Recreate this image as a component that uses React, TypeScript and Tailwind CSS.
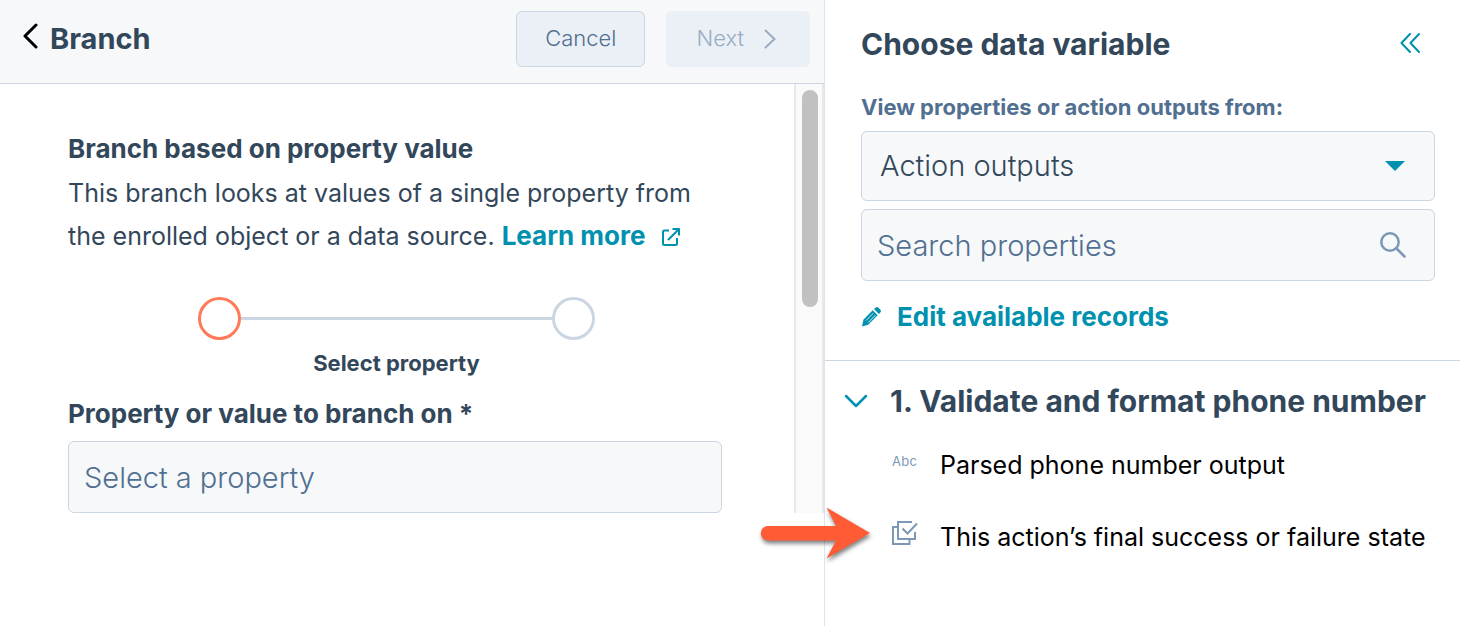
import React, { useState } from 'react';

interface OutputItem {
    id: string;
    label: string;
    icon: React.ReactNode;
    highlighted?: boolean;
}

const CheckStackIcon = () => (
    <svg viewBox="0 0 26 24" className="w-[26px] h-6" fill="none" stroke="#7c98b6" strokeWidth="2" aria-hidden="true">
        <path d="M20 1H6v17h17v-7" />
        <path d="M5 6H1v17h16.500v-4" />
        <path d="M10.500 7.500l5 5L25 2.500" />
    </svg>
);

const PointerArrow = () => (
    <svg
        viewBox="0 0 110 54"
        className="absolute right-full mr-[22px] top-1/2 -translate-y-1/2 w-[110px] h-[54px] overflow-visible drop-shadow-[1px_3px_2px_rgba(0,0,0,0.5)]"
        fill="#ff5c35"
        aria-hidden="true"
    >
        <path d="M8 20h68L66.500 1.500 110 27 66.500 52.500 76 34.500H8a7.250 7.250 0 0 1 0-14.500z" />
    </svg>
);

const outputs: OutputItem[] = [
    {
        id: 'parsed',
        label: 'Parsed phone number output',
        icon: <span className="text-[13px] leading-6 tracking-wide text-[#7c98b6]">Abc</span>,
    },
    {
        id: 'state',
        label: 'This action’s final success or failure state',
        icon: <CheckStackIcon />,
        highlighted: true,
    },
];

const BranchPanel: React.FC = () => {
    const [property, setProperty] = useState('');

    return (
        <section className="flex flex-col min-w-0 border-r border-[#dfe3eb]">
            {/* Panel header */}
            <header className="h-[84px] flex items-center justify-between pl-[22px] pr-3.5 pb-1.5 bg-[#f6f8fa] border-b border-[#cbd6e2]">
                <div className="flex items-center gap-3">
                    <button aria-label="Back" className="pb-1.5">
                        <svg viewBox="0 0 16 26" className="w-4 h-[26px]" fill="none" stroke="#000" strokeWidth="3" strokeLinecap="round" strokeLinejoin="round">
                            <path d="M14 2L3 13l11 11" />
                        </svg>
                    </button>
                    <h1 className="text-[29px] leading-9 font-bold">Branch</h1>
                </div>
                <div className="flex gap-[21px]">
                    <button className="h-14 px-7 rounded-md border border-[#cbd6e2] bg-[#eaf0f6] text-[22px] font-[350] text-[#516f90]">
                        Cancel
                    </button>
                    <button disabled className="h-14 pl-[30px] pr-[34px] flex items-center gap-5 rounded-md bg-[#eaf0f6] text-[22px] font-[350] text-[#99acc2]">
                        Next
                        <svg viewBox="0 0 12 20" className="w-3 h-5" fill="none" stroke="currentColor" strokeWidth="2" strokeLinecap="round" aria-hidden="true">
                            <path d="M1.500 1.500L10.500 10l-9 8.500" />
                        </svg>
                    </button>
                </div>
            </header>

            <div className="flex">
                <div className="flex-1 min-w-0 pl-[68px] pr-[72px] pt-[43px]">
                    <h2 className="text-[26px] leading-[43px] font-bold">Branch based on property value</h2>
                    <p className="pt-0.5 text-[25px] leading-[43px]">
                        This branch looks at values of a single property from the enrolled object or a data source.{' '}
                        <a href="#learn" className="text-[26px] leading-none font-bold text-[#0091ae] whitespace-nowrap">
                            Learn more
                            <svg viewBox="0 0 20 20" className="inline w-5 h-5 ml-4 align-[-2px]" fill="none" stroke="currentColor" strokeWidth="2" strokeLinejoin="round" aria-hidden="true">
                                <path d="M8 3.500H3.500a1.500 1.500 0 0 0-1.500 1.500v11.500a1.500 1.500 0 0 0 1.500 1.500h11a1.500 1.500 0 0 0 1.500-1.500V11" />
                                <path d="M7 13L18 2M11.500 2H18v6.500" />
                            </svg>
                        </a>
                    </p>

                    {/* Stepper */}
                    <div className="pl-[3px] pt-[39px]">
                        <div className="flex items-center px-[127px]">
                            <span className="w-[43px] h-[43px] shrink-0 rounded-full border-3 border-[#ff7a59]"></span>
                            <span className="flex-1 h-[3px] bg-[#cbd6e2]"></span>
                            <span className="w-[43px] h-[43px] shrink-0 rounded-full border-3 border-[#cbd6e2]"></span>
                        </div>
                        <p className="pt-[7px] text-center text-[22px] leading-8 font-bold">Select property</p>
                    </div>

                    <label htmlFor="branch-property" className="block pt-[13px] text-[26px] leading-[43px] font-bold">
                        Property or value to branch on *
                    </label>
                    <input
                        id="branch-property"
                        type="text"
                        value={property}
                        onChange={(e) => setProperty(e.target.value)}
                        placeholder="Select a property"
                        className="block mt-1.5 w-full h-[72px] px-[15px] rounded-md border border-[#cbd6e2] bg-[#f6f8fa] text-[29px] font-[350] placeholder:text-[#516f90]"
                    />
                </div>

                {/* Scroll track */}
                <div className="w-[30px] shrink-0 pl-1.5 pt-1.5 bg-[#fafafa] border-x-2 border-[#e8e8e8]">
                    <div className="w-4 h-[217px] rounded-full bg-[#c1c1c1]"></div>
                </div>
            </div>
        </section>
    );
};

const VariablePanel: React.FC = () => {
    const [source, setSource] = useState('Action outputs');
    const [query, setQuery] = useState('');
    const [open, setOpen] = useState(true);

    return (
        <aside className="min-w-0">
            <div className="pl-9 pr-[25px] pt-[26px] pb-[25px] border-b border-[#cbd6e2]">
                <div className="flex items-center justify-between pr-[15px]">
                    <h2 className="text-[30px] leading-9 font-bold">Choose data variable</h2>
                    <button aria-label="Collapse panel" className="pb-0.5">
                        <svg viewBox="0 0 20 20" className="w-5 h-5" fill="none" stroke="#0091ae" strokeWidth="2" strokeLinecap="round" strokeLinejoin="round">
                            <path d="M10 1L1.500 10l8.500 9M19 1l-8.500 9 8.500 9" />
                        </svg>
                    </button>
                </div>

                <label htmlFor="source" className="block pt-[29px] text-[22px] leading-8 font-bold text-[#516f90]">
                    View properties or action outputs from:
                </label>
                <div className="relative mt-2">
                    <select
                        id="source"
                        value={source}
                        onChange={(e) => setSource(e.target.value)}
                        className="appearance-none block w-full h-[70px] px-[18px] rounded-md border border-[#cbd6e2] bg-[#f6f8fa] text-[29px] font-[350]"
                    >
                        <option>Action outputs</option>
                    </select>
                    <svg viewBox="0 0 20 10" className="absolute right-[30px] top-1/2 -translate-y-1/2 w-5 h-2.5 pointer-events-none" fill="#0091ae" aria-hidden="true">
                        <path d="M0 0h20L10 10z" />
                    </svg>
                </div>
                <div className="relative mt-2">
                    <input
                        type="text"
                        aria-label="Search properties"
                        value={query}
                        onChange={(e) => setQuery(e.target.value)}
                        placeholder="Search properties"
                        className="block w-full h-[72px] pl-[15px] pr-16 rounded-md border border-[#cbd6e2] bg-[#f6f8fa] text-[29px] font-[350] placeholder:text-[#516f90]"
                    />
                    <svg viewBox="0 0 26 26" className="absolute right-[29px] top-1/2 -translate-y-1/2 w-[26px] h-[26px]" fill="none" stroke="#7c98b6" strokeWidth="2.500" strokeLinecap="round" aria-hidden="true">
                        <circle cx="10" cy="10" r="8.700" />
                        <path d="M16.500 16.500l8 8" />
                    </svg>
                </div>

                <button className="mt-[18px] flex items-center gap-4 text-[26px] leading-9 font-bold text-[#0091ae]">
                    <svg viewBox="0 0 20 20" className="w-5 h-5" aria-hidden="true">
                        <path d="M11.700 3.300l5 5L7.200 17.800 1 19.500l1.400-6.700z" fill="#0091ae" />
                        <path d="M13 2l1.500-1.300a2.200 2.200 0 0 1 2.900 0l1.900 1.900a2.200 2.200 0 0 1 0 2.900L18 7z" fill="#0091ae" />
                        <path d="M5 13.500l7.200-7.200M7.200 15.500l7.200-7.200" stroke="#fff" strokeWidth="0.800" />
                    </svg>
                    Edit available records
                </button>
            </div>

            {/* Action outputs group */}
            <button
                onClick={() => setOpen(!open)}
                aria-expanded={open}
                className="flex items-center gap-[22px] pl-[19px] pt-[22px] text-[30px] leading-9 font-bold whitespace-nowrap"
            >
                <svg viewBox="0 0 24 14" className="w-6 h-3.5 shrink-0" fill="none" stroke="#0091ae" strokeWidth="2.500" strokeLinecap="round" strokeLinejoin="round" aria-hidden="true">
                    <path d="M2 2l10 10L22 2" />
                </svg>
                1. Validate and format phone number
            </button>
            {open && (
                <ul className="pt-2.5">
                    {outputs.map(item => (
                        <li key={item.id} className="h-[72px] flex items-center pl-[67px]">
                            <div className="relative w-12 shrink-0 -mt-2 flex items-center">
                                {item.highlighted && <PointerArrow />}
                                {item.icon}
                            </div>
                            <span className="text-[25px] leading-9 text-black whitespace-nowrap">{item.label}</span>
                        </li>
                    ))}
                </ul>
            )}
        </aside>
    );
};

export default function App() {
    return (
        <main className="min-h-screen grid grid-cols-[825fr_635fr] bg-white text-[#33475b] font-['Inter',sans-serif]">
            <BranchPanel />
            <VariablePanel />
        </main>
    );
}
